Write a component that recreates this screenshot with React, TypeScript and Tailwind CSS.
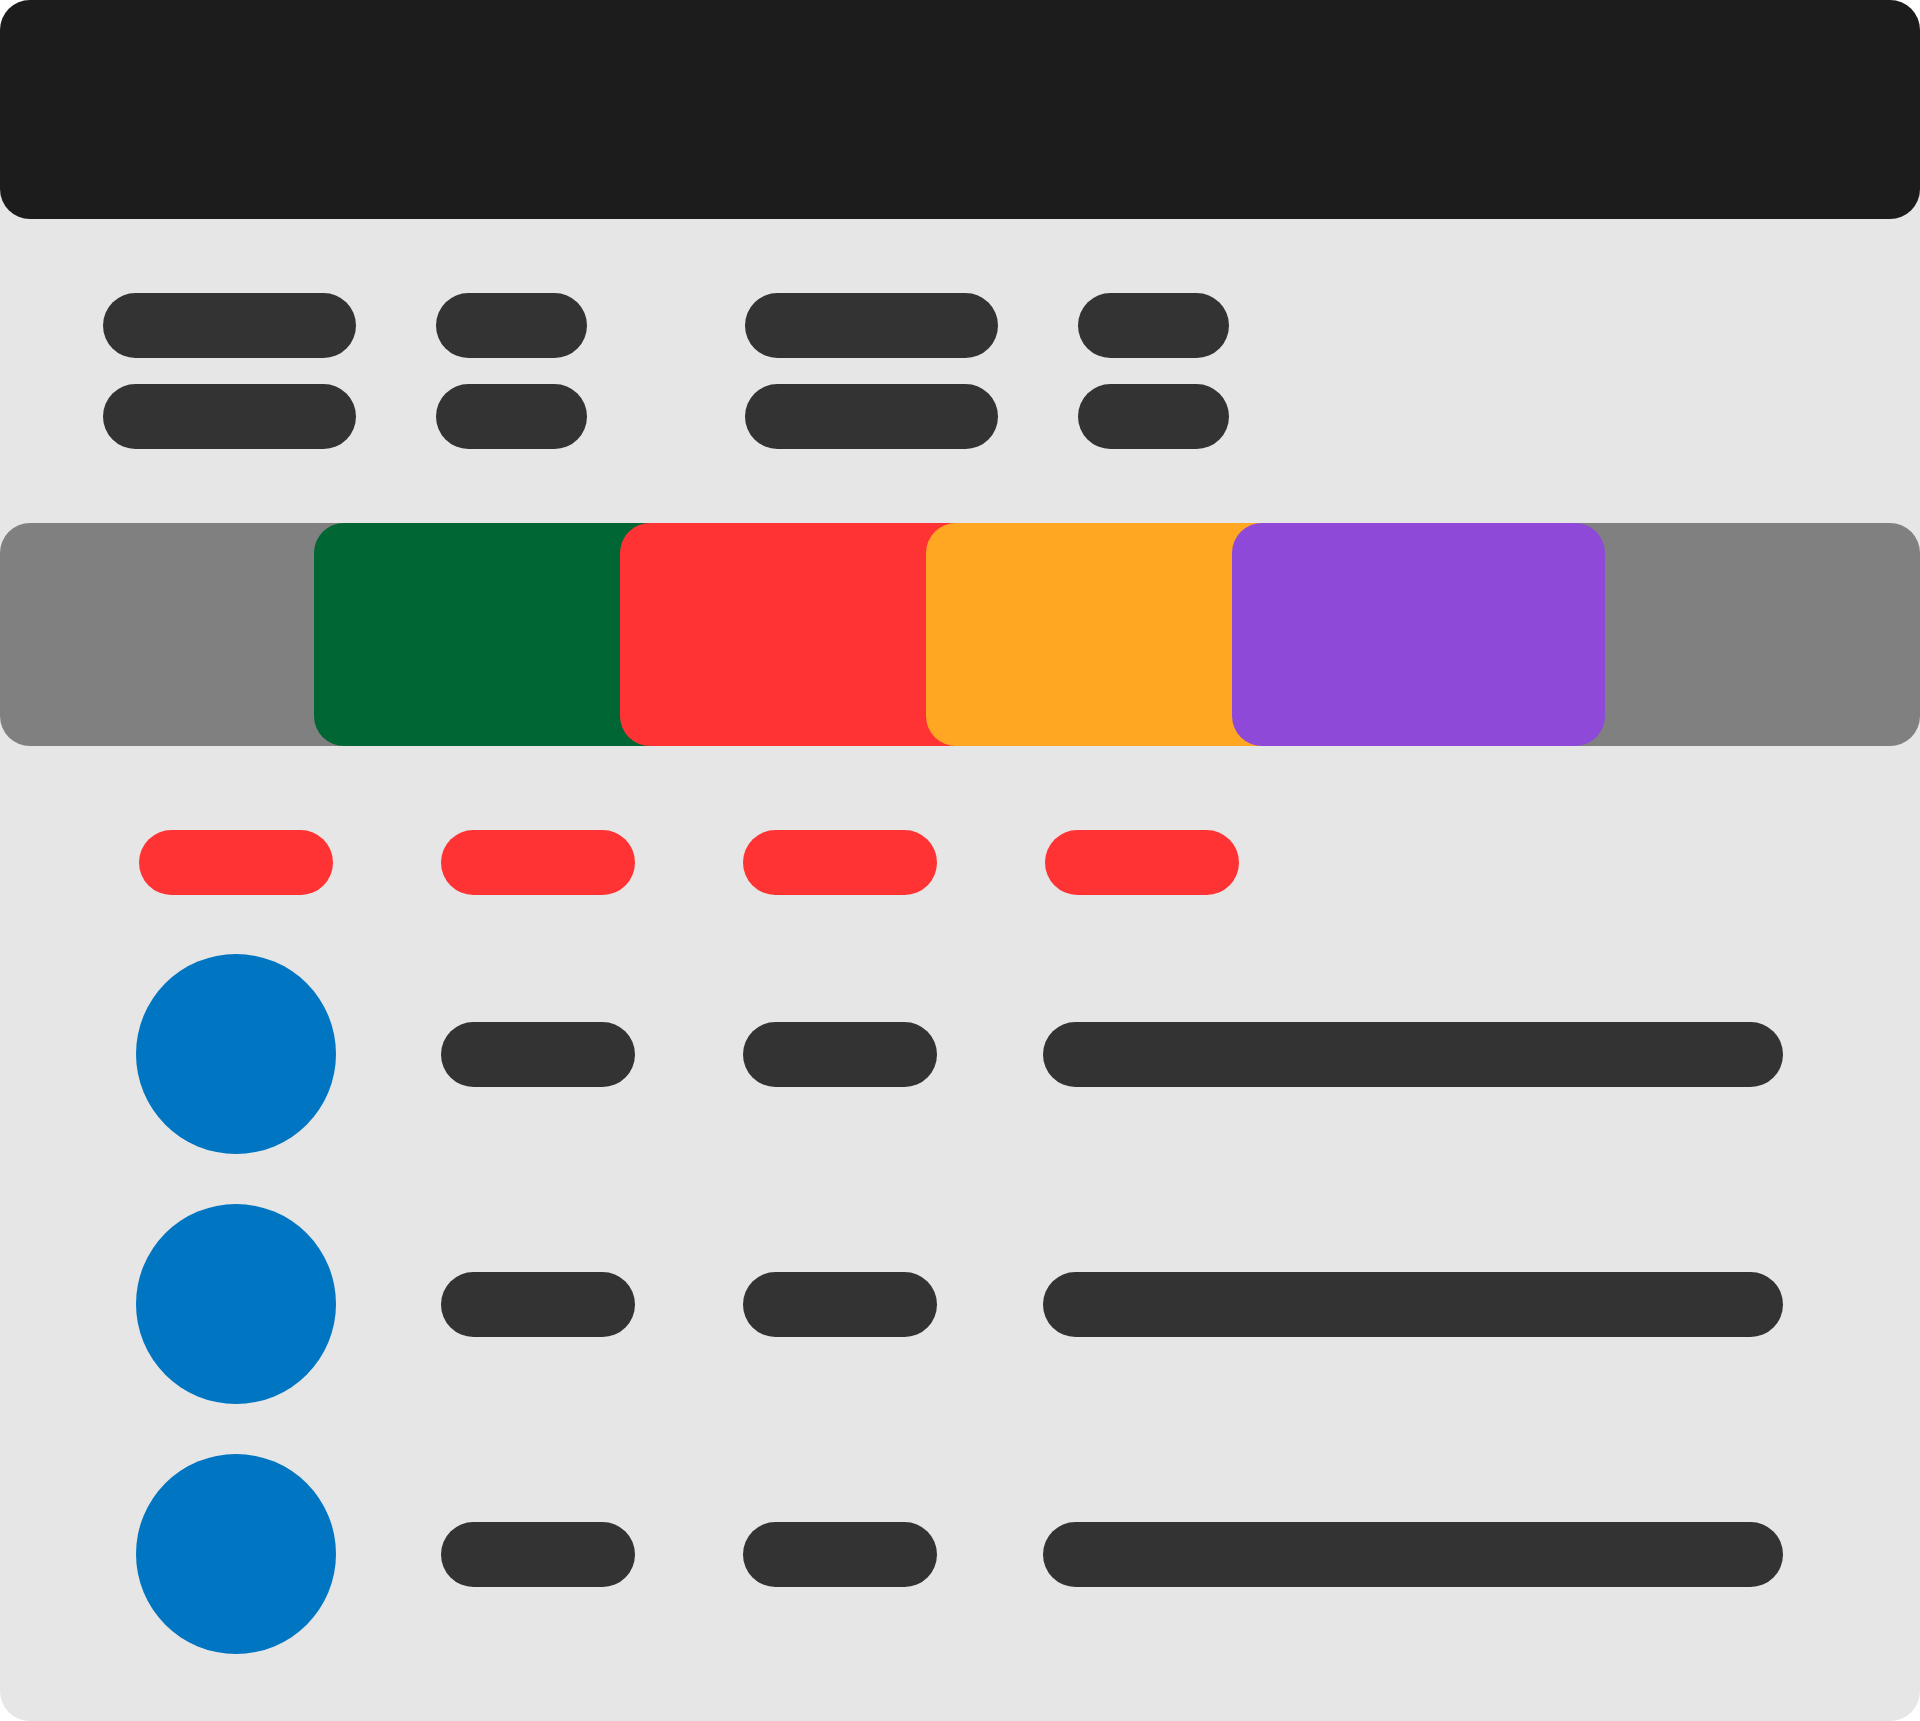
const pill = 'h-[65px] rounded-full';

function TopBars() {
  return (
    <div className="flex pt-[74px] pl-[103px]">
      <div className="flex flex-col gap-[26px]">
        <div className={`${pill} w-[253px] bg-[#333333]`} />
        <div className={`${pill} w-[253px] bg-[#333333]`} />
      </div>
      <div className="ml-[80px] flex flex-col gap-[26px]">
        <div className={`${pill} w-[151px] bg-[#333333]`} />
        <div className={`${pill} w-[151px] bg-[#333333]`} />
      </div>
      <div className="ml-[158px] flex flex-col gap-[26px]">
        <div className={`${pill} w-[253px] bg-[#333333]`} />
        <div className={`${pill} w-[253px] bg-[#333333]`} />
      </div>
      <div className="ml-[80px] flex flex-col gap-[26px]">
        <div className={`${pill} w-[151px] bg-[#333333]`} />
        <div className={`${pill} w-[151px] bg-[#333333]`} />
      </div>
    </div>
  );
}

function ColorStrip() {
  return (
    <div className="mt-[74px] flex h-[223px] w-full rounded-[30px] bg-[#808080] pl-[314px]">
      <div className="h-full w-[373px] rounded-[30px] bg-[#006633]" />
      <div className="-ml-[67px] h-full w-[373px] rounded-[30px] bg-[#ff3333]" />
      <div className="-ml-[67px] h-full w-[373px] rounded-[30px] bg-[#ffa722]" />
      <div className="-ml-[67px] h-full w-[373px] rounded-[30px] bg-[#8e49d9]" />
    </div>
  );
}

function ItemRow() {
  return (
    <div className="flex h-[200px] items-center pl-[136px]">
      <div className="h-[200px] w-[200px] rounded-full bg-[#0075c2]" />
      <div className={`${pill} ml-[105px] w-[194px] bg-[#333333]`} />
      <div className={`${pill} ml-[108px] w-[194px] bg-[#333333]`} />
      <div className={`${pill} ml-[106px] w-[740px] bg-[#333333]`} />
    </div>
  );
}

export default function App() {
  return (
    <div className="min-h-[1721px] w-[1920px] bg-white">
      <div className="flex h-[1721px] w-[1920px] flex-col rounded-[30px] bg-[#e6e6e6]">
        <div className="h-[219px] w-full rounded-[30px] bg-[#1c1c1c]" />
        <TopBars />
        <ColorStrip />
        <div className="mt-[84px] flex gap-[108px] pl-[139px]">
          <div className={`${pill} w-[194px] bg-[#ff3333]`} />
          <div className={`${pill} w-[194px] bg-[#ff3333]`} />
          <div className={`${pill} w-[194px] bg-[#ff3333]`} />
          <div className={`${pill} w-[194px] bg-[#ff3333]`} />
        </div>
        <div className="mt-[59px] flex flex-col gap-[50px]">
          <ItemRow />
          <ItemRow />
          <ItemRow />
        </div>
      </div>
    </div>
  );
}
